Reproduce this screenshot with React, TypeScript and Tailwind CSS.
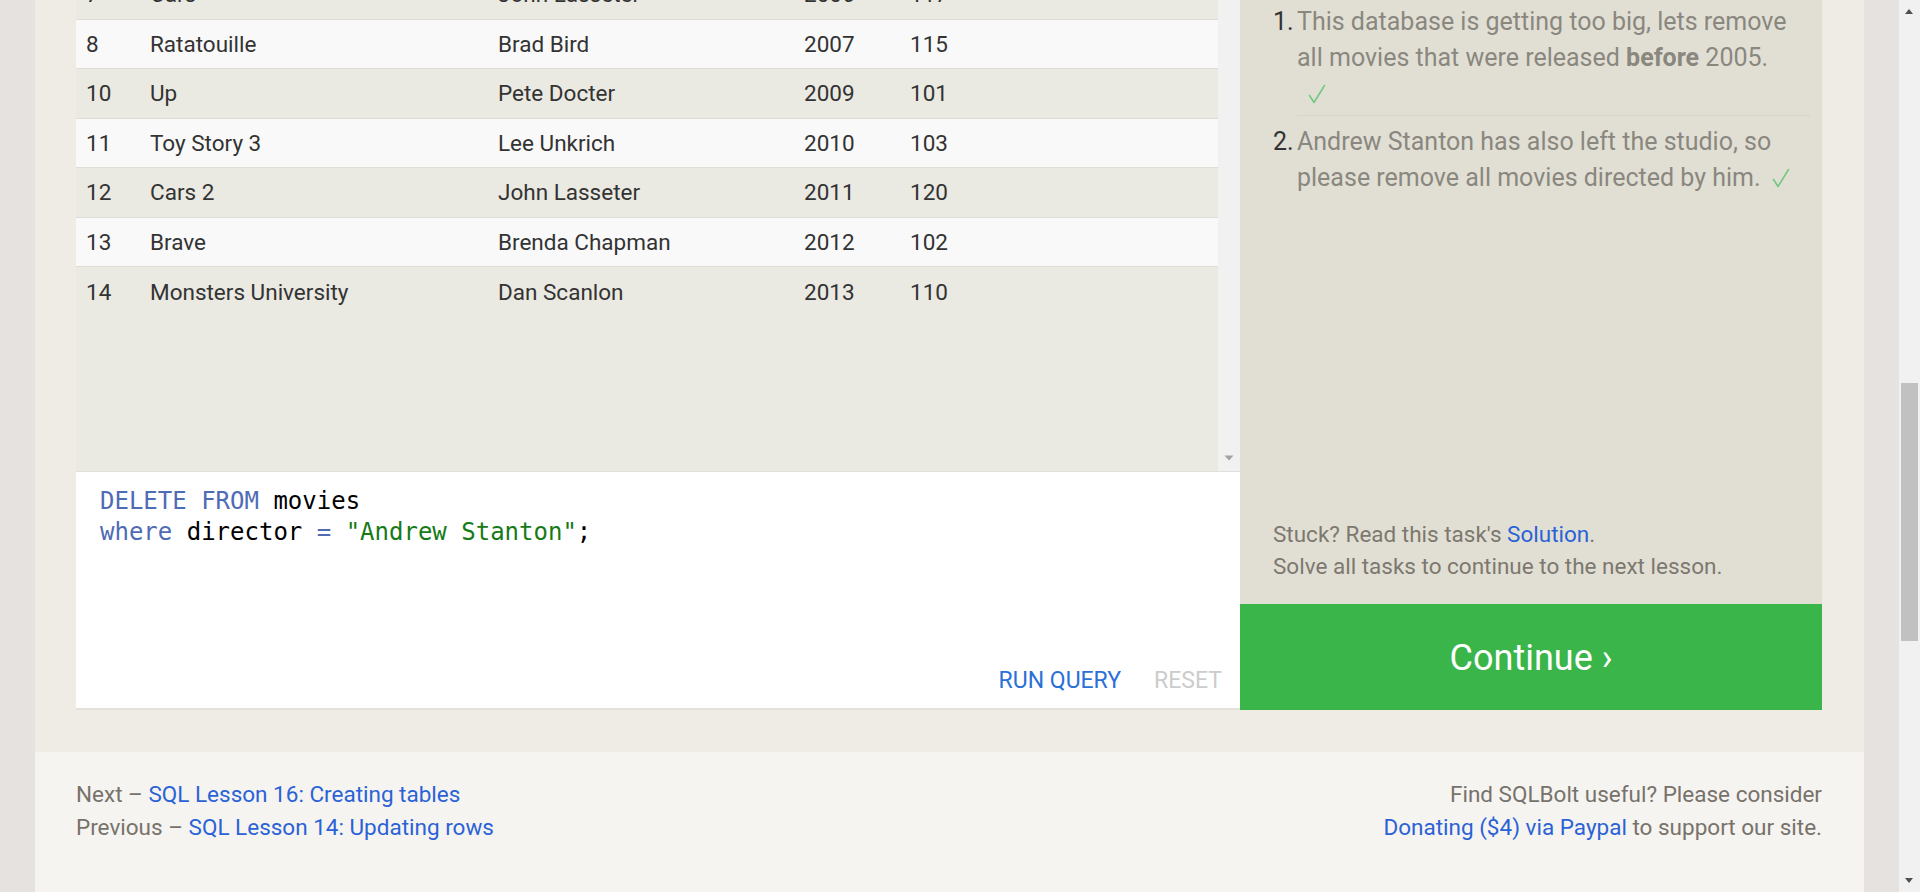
import React from "react";

const rows = [
  { id: 7, title: "Cars", director: "John Lasseter", year: 2006, len: 117 },
  { id: 8, title: "Ratatouille", director: "Brad Bird", year: 2007, len: 115 },
  { id: 10, title: "Up", director: "Pete Docter", year: 2009, len: 101 },
  { id: 11, title: "Toy Story 3", director: "Lee Unkrich", year: 2010, len: 103 },
  { id: 12, title: "Cars 2", director: "John Lasseter", year: 2011, len: 120 },
  { id: 13, title: "Brave", director: "Brenda Chapman", year: 2012, len: 102 },
  { id: 14, title: "Monsters University", director: "Dan Scanlon", year: 2013, len: 110 },
];

function Check() {
  return (
    <svg width="18" height="20" viewBox="0 0 18 20" className="inline-block align-[-2px]">
      <path d="M1.5 11.5 L6 18.5 L16.5 1.5" fill="none" stroke="#74c883" strokeWidth="1.6" strokeLinecap="round" strokeLinejoin="round" />
    </svg>
  );
}

export default function App() {
  return (
    <div className="flex h-[892px] w-[1920px] overflow-hidden bg-[#e6e2df] font-['Roboto',sans-serif]">
      <div className="flex flex-1 flex-col items-center">
        {/* main container */}
        <div className="flex w-[1829px] bg-[#efece6] pb-[42px] pl-[41px] pr-[42px]">
          {/* left column */}
          <div className="flex w-[1164px] flex-col">
            <div className="flex h-[471px] overflow-hidden">
              <div className="flex-1 overflow-hidden bg-[#eae9e2] text-[22.5px] leading-[32px] text-[#333]">
                <div className="mt-[-30px]">
                  {rows.map((r, i) => (
                    <div
                      key={r.id}
                      className={
                        "grid h-[49.5px] grid-cols-[64px_348px_306px_106px_1fr] items-center " +
                        (i === rows.length - 1 ? "" : "border-b border-[#deddd6] ") +
                        (i % 2 === 0 ? "bg-[#eae9e2]" : "bg-[#f9f9f9]")
                      }
                    >
                      <div className="pl-[10px]">{r.id}</div>
                      <div className="pl-[10px]">{r.title}</div>
                      <div className="pl-[10px]">{r.director}</div>
                      <div className="pl-[10px]">{r.year}</div>
                      <div className="pl-[10px]">{r.len}</div>
                    </div>
                  ))}
                </div>
              </div>
              <div className="flex w-[22px] flex-col justify-end bg-[#f1f1f1] pb-[9px]">
                <svg width="22" height="8" viewBox="0 0 22 8">
                  <path d="M6.5 1.5 L15.5 1.5 L11 6.5 Z" fill="#a3a3a3" />
                </svg>
              </div>
            </div>
            <div className="flex h-[239px] flex-col border-b-2 border-t border-b-[#e4e1da] border-t-[#e0dfd9] bg-white">
              <div className="pl-[24px] pt-[14px] font-['DejaVu_Sans_Mono',monospace] text-[24px] leading-[31px] text-black">
                <div>
                  <span className="text-[#4e6bb4]">DELETE</span> <span className="text-[#4e6bb4]">FROM</span> movies
                </div>
                <div>
                  <span className="text-[#4e6bb4]">where</span> director <span className="text-[#4e6bb4]">=</span>{" "}
                  <span className="text-[#167a16]">"Andrew Stanton"</span>;
                </div>
              </div>
              <div className="flex-1" />
              <div className="flex justify-end gap-[33px] pb-[11px] pr-[18px] text-[23px] leading-[32px]">
                <span className="text-[#2b6fd9]">RUN QUERY</span>
                <span className="text-[#cccccc]">RESET</span>
              </div>
            </div>
          </div>
          {/* sidebar */}
          <div className="flex h-[710px] w-[582px] flex-col bg-[#e1dfd4]">
            <div className="pl-[33px] pr-[12px] pt-[4px] text-[25px] leading-[36px] text-[#8a877f]">
              <div className="flex">
                <span className="w-[24px] shrink-0 text-[#333]">1.</span>
                <div className="flex-1 border-b border-[#d6d4c9] pb-[3px]">
                  This database is getting too big, lets remove
                  <br />
                  all movies that were released <b className="font-bold">before</b> 2005.
                  <br />
                  <span className="ml-[11px]">
                    <Check />
                  </span>
                </div>
              </div>
              <div className="flex pt-[8px]">
                <span className="w-[24px] shrink-0 text-[#333]">2.</span>
                <div className="flex-1">
                  Andrew Stanton has also left the studio, so
                  <br />
                  please remove all movies directed by him.
                  <span className="ml-[11px]">
                    <Check />
                  </span>
                </div>
              </div>
            </div>
            <div className="flex-1" />
            <div className="pb-[22px] pl-[33px] text-[22.5px] leading-[32px] text-[#7d786f]">
              <div>
                Stuck? Read this task's <span className="text-[#2b62d6]">Solution</span>.
              </div>
              <div>Solve all tasks to continue to the next lesson.</div>
            </div>
            <div className="flex h-[106px] items-center justify-center bg-[#3ab54a] pt-[2px] text-[36px] text-white">
              Continue ›
            </div>
          </div>
        </div>
        {/* footer */}
        <div className="flex w-[1829px] flex-1 justify-between bg-[#f5f4f0] pl-[41px] pr-[42px] pt-[26px] text-[22.5px] leading-[33px] text-[#77726b]">
          <div>
            <div>
              Next – <span className="text-[#2b62d6]">SQL Lesson 16: Creating tables</span>
            </div>
            <div>
              Previous – <span className="text-[#2b62d6]">SQL Lesson 14: Updating rows</span>
            </div>
          </div>
          <div className="text-right">
            <div>Find SQLBolt useful? Please consider</div>
            <div>
              <span className="text-[#2b62d6]">Donating ($4) via Paypal</span> to support our site.
            </div>
          </div>
        </div>
      </div>
      {/* page scrollbar */}
      <div className="relative w-[21px] bg-[#f1f1f1]">
        <svg width="21" height="20" viewBox="0 0 21 20" className="absolute left-0 top-[2px]">
          <path d="M6 12 L14 12 L10 7 Z" fill="#505050" />
        </svg>
        <div className="absolute left-[2px] right-[2px] top-[383px] h-[258px] bg-[#c1c1c1]" />
        <svg width="21" height="20" viewBox="0 0 21 20" className="absolute bottom-[2px] left-0">
          <path d="M6 8 L14 8 L10 13 Z" fill="#505050" />
        </svg>
      </div>
    </div>
  );
}
